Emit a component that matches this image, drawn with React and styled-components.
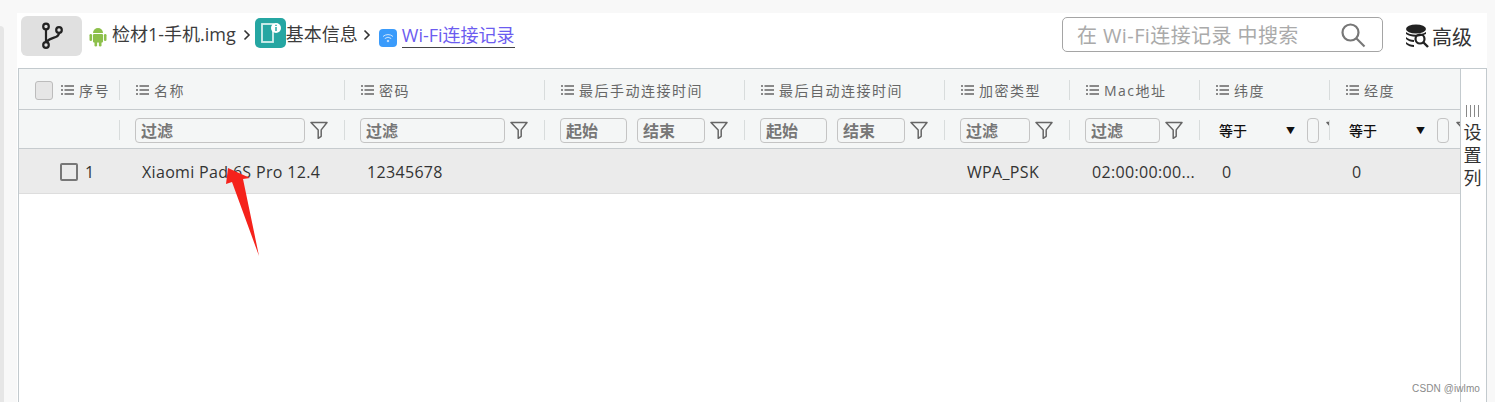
import React from 'react'
import styled, { createGlobalStyle } from 'styled-components'

const GlobalStyle = createGlobalStyle`
  html, body {
    margin: 0;
    padding: 0;
    background: #f8f8f8;
  }
  * {
    box-sizing: border-box;
  }
`

const COLUMNS = '100px 225px 200px 200px 200px 125px 130px 130px 131px'

const Page = styled.div`
  position: relative;
  display: flex;
  width: 1495px;
  height: 402px;
  overflow: hidden;
  padding: 13px 8px 0 0;
  font-family: "Open Sans", "Noto Sans CJK SC", sans-serif;
  color: #333;
`

const SidePanel = styled.div`
  width: 4px;
  margin: 13px 13px 0 0;
  background: #e6e6e6;
  border-top-right-radius: 4px;
`

const Main = styled.div`
  flex: 1;
  display: flex;
  flex-direction: column;
  gap: 10px;
  background: #fff;
`

const Toolbar = styled.div`
  display: flex;
  align-items: center;
  height: 45px;
  padding: 3px 0 2px 4px;
  flex-shrink: 0;
`

const BranchButton = styled.div`
  display: flex;
  align-items: center;
  justify-content: center;
  width: 61px;
  height: 40px;
  background: #e0e0e0;
  border-radius: 6px;
  margin-right: 7px;
`

const Crumb = styled.span`
  margin-bottom: 6px;
  font-size: 18px;
  color: #3c3c3c;
  white-space: nowrap;
`

const CrumbSep = styled.span`
  display: flex;
  width: ${(props) => props.$width}px;
  margin-bottom: 3px;
  padding-left: ${(props) => props.$pad}px;
  color: #333;
`

const TealIcon = styled.div`
  display: flex;
  align-items: center;
  justify-content: center;
  width: 31px;
  height: 30px;
  margin-top: -6px;
  background: #25a6a2;
  border-radius: 5px;
  flex-shrink: 0;
`

const WifiIcon = styled.div`
  display: flex;
  align-items: center;
  justify-content: center;
  width: 18px;
  height: 18px;
  margin: 4px 5px 0 0;
  background: #3a9bfb;
  border-radius: 4px;
  flex-shrink: 0;
`

const CurrentCrumb = styled(Crumb)`
  margin-bottom: 2px;
  color: #6c5cf0;
  border-bottom: 1px solid #444;
  line-height: 24px;
`

const SearchBox = styled.div`
  display: flex;
  align-items: center;
  justify-content: space-between;
  width: 321px;
  height: 35px;
  margin: -3px 0 0 auto;
  padding: 0 16px 0 14px;
  border: 1px solid #a5a5a5;
  border-radius: 5px;
`

const SearchInput = styled.input`
  width: 250px;
  border: none;
  outline: none;
  padding: 1px 0 0;
  background: transparent;
  font: 20px "Open Sans", "Noto Sans CJK SC", sans-serif;
  letter-spacing: 0.4px;
  &::placeholder {
    color: #aaa;
    opacity: 1;
  }
`

const Advanced = styled.div`
  display: flex;
  align-items: center;
  gap: 3px;
  margin: 0 15px 0 22px;
  font-size: 20px;
  color: #333;
`

const Table = styled.div`
  flex: 1;
  display: flex;
  margin-left: 1px;
  border: 1px solid #c3cace;
  border-bottom: none;
`

const TableBody = styled.div`
  width: 1441px;
  flex-shrink: 0;
  display: flex;
  flex-direction: column;
`

const Row = styled.div`
  display: grid;
  grid-template-columns: ${COLUMNS};
  background: ${(props) => props.$bg};
  height: ${(props) => props.$height}px;
  border-bottom: 1px solid ${(props) => props.$line};
`

const HeadCell = styled.div`
  display: flex;
  align-items: center;
  gap: 5px;
  overflow: hidden;
  padding-top: 2px;
  font-size: 14px;
  letter-spacing: 1.5px;
  color: #666;
  white-space: nowrap;
  padding-left: ${(props) => (props.$first ? 16 : 0)}px;
  &::before {
    content: ${(props) => (props.$first ? 'none' : '""')};
    width: 1px;
    height: 20px;
    margin-right: 11px;
    background: #d8dcdc;
    flex-shrink: 0;
  }
`

const FilterCell = styled.div`
  display: flex;
  align-items: center;
  overflow: hidden;
  padding-top: 2px;
  &::before {
    content: ${(props) => (props.$first ? 'none' : '""')};
    width: 1px;
    height: 20px;
    margin-right: 15px;
    background: #d8dcdc;
    flex-shrink: 0;
  }
`

const HeadCheck = styled.span`
  width: 18px;
  height: 19px;
  margin-right: 3px;
  background: #e6e6e6;
  border: 1px solid #bcbcbc;
  border-radius: 3px;
  flex-shrink: 0;
`

const FilterInput = styled.input`
  width: ${(props) => props.$width}px;
  height: 25px;
  margin-right: ${(props) => props.$gap}px;
  padding: 0 5px;
  border: 1px solid #c4c4c4;
  border-radius: 4px;
  outline: none;
  background: transparent;
  flex-shrink: 0;
  font: bold 16px "Noto Sans CJK SC", sans-serif;
  &::placeholder {
    color: #777;
    opacity: 1;
  }
`

const Equals = styled.div`
  display: flex;
  justify-content: space-between;
  align-items: center;
  width: 76px;
  margin: 0 12px 0 4px;
  flex-shrink: 0;
  font-size: 14px;
  font-weight: 500;
  color: #111;
`

const Caret = styled.span`
  font-size: 9px;
`

const Narrow = styled.span`
  width: 12px;
  height: 25px;
  margin-right: 7px;
  border: 1px solid #c4c4c4;
  border-radius: 4px;
  flex-shrink: 0;
`

const DataCell = styled.div`
  display: flex;
  align-items: center;
  padding: 2px 0 0 ${(props) => (props.$first ? 41 : 23)}px;
  font-size: 16px;
  letter-spacing: 0.33px;
  color: #333;
  min-width: 0;
  white-space: nowrap;
`

const RowCheck = styled.span`
  width: 18px;
  height: 18px;
  margin-right: 7px;
  border: 2px solid #777;
  border-radius: 2px;
  flex-shrink: 0;
`

const ColumnSetter = styled.div`
  flex: 1;
  display: flex;
  flex-direction: column;
  align-items: center;
  padding: 36px 2px 0 0;
  border-left: 1px solid #c3cace;
  background: #fff;
`

const Bars = styled.span`
  width: 14px;
  height: 12px;
  margin-bottom: 4px;
  background: repeating-linear-gradient(90deg, #888 0 1px, transparent 1px 4px);
`

const SetterText = styled.span`
  font-size: 18px;
  line-height: 23px;
  width: 18px;
  text-align: center;
  color: #333;
`

const ArrowMark = styled.svg`
  position: absolute;
  left: 220px;
  top: 165px;
`

const Watermark = styled.span`
  position: absolute;
  right: 15px;
  bottom: 8px;
  font: 10px "Liberation Sans", sans-serif;
  letter-spacing: 0.1px;
  color: #8a8a8a;
`

const ListIcon = () => (
  <svg width="13" height="10" viewBox="0 0 13 10" style={{ flexShrink: 0 }}>
    <path d="M0 1h2M0 5h2M0 9h2M3.500 1H13M3.500 5H13M3.500 9H13" stroke="#666" strokeWidth="1.400" />
  </svg>
)

const FunnelIcon = () => (
  <svg width="18" height="20" viewBox="0 0 18 20" fill="none" style={{ flexShrink: 0 }}>
    <path d="M1 2.500h16l-5.800 7.400v6.400l-3 2V9.900z" stroke="#666" strokeWidth="1.500" strokeLinejoin="round" />
  </svg>
)

const BranchIcon = () => (
  <svg width="26" height="28" viewBox="0 0 26 28" fill="none" stroke="#222" strokeWidth="2.200">
    <circle cx="7" cy="4.500" r="2.800" />
    <circle cx="7" cy="23" r="2.800" />
    <circle cx="20" cy="8" r="2.800" />
    <path d="M7 7.500v12.500M20 11c0 6-8 3-12.500 9" />
  </svg>
)

const AndroidIcon = () => (
  <svg width="18" height="20" viewBox="0 0 18 20" fill="#8dc04b" style={{ marginRight: 5, marginTop: 1, flexShrink: 0 }}>
    <path d="M4 6a5 5 0 0 1 10 0z" />
    <rect x="4" y="7" width="10" height="8.500" rx="1" />
    <rect x="0.500" y="7" width="2.600" height="7" rx="1.300" />
    <rect x="14.900" y="7" width="2.600" height="7" rx="1.300" />
    <rect x="5.500" y="14" width="2.600" height="5.500" rx="1.300" />
    <rect x="9.900" y="14" width="2.600" height="5.500" rx="1.300" />
  </svg>
)

const ChevronIcon = () => (
  <svg width="8" height="12" viewBox="0 0 8 12" fill="none" stroke="#333" strokeWidth="1.600">
    <path d="M1.500 1.500 6 6l-4.500 4.500" />
  </svg>
)

const PhoneInfoIcon = () => (
  <svg width="24" height="24" viewBox="0 0 24 24">
    <rect x="4" y="3" width="11" height="18" fill="none" stroke="#d5f0ee" strokeWidth="1.800" />
    <circle cx="18" cy="7" r="5" fill="#fff" />
    <path d="M18 6v4M18 3.800v1.200" stroke="#25a6a2" strokeWidth="1.500" />
  </svg>
)

const WifiGlyph = () => (
  <svg width="12" height="10" viewBox="0 0 12 10" fill="none" stroke="#cfe6ff" strokeWidth="1">
    <path d="M1 3.500a7.500 7.500 0 0 1 10 0M2.800 5.500a5 5 0 0 1 6.400 0" />
    <circle cx="6" cy="8" r="0.800" fill="#cfe6ff" />
  </svg>
)

const SearchGlyph = () => (
  <svg width="26" height="26" viewBox="0 0 26 26" fill="none" stroke="#777" strokeWidth="2.200" style={{ flexShrink: 0 }}>
    <circle cx="10.500" cy="10.500" r="8" />
    <path d="m16.500 16.500 8 8" />
  </svg>
)

const AdvancedIcon = () => (
  <svg width="24" height="24" viewBox="0 0 24 24" style={{ flexShrink: 0 }}>
    <ellipse cx="11" cy="5" rx="10" ry="4.500" fill="#222" />
    <path d="M1 8c3 3 14 4 20 0v2c-6 3-14 4-20 0zM1 13c2 2 5 3 8 3v2c-3 0-6-1-8-3zM1 18c2 2 5 3 8 3v2c-3 0-6-1-8-3z" fill="#222" />
    <circle cx="15" cy="15" r="4.500" fill="none" stroke="#222" strokeWidth="2.200" />
    <path d="m18 18 5 5" stroke="#222" strokeWidth="2.400" />
  </svg>
)

const headers = ['名称', '密码', '最后手动连接时间', '最后自动连接时间', '加密类型', 'Mac地址', '纬度', '经度']

const Coordinate = () => (
  <FilterCell>
    <Equals>
      等于
      <Caret>▼</Caret>
    </Equals>
    <Narrow />
    <FunnelIcon />
  </FilterCell>
)

const TextFilter = ({ width }) => (
  <FilterCell>
    <FilterInput $width={width} $gap={5} placeholder="过滤" />
    <FunnelIcon />
  </FilterCell>
)

const DateFilter = () => (
  <FilterCell>
    <FilterInput $width={67} $gap={10} placeholder="起始" />
    <FilterInput $width={68} $gap={5} placeholder="结束" />
    <FunnelIcon />
  </FilterCell>
)

export default function App() {
  return (
    <Page>
      <GlobalStyle />
      <SidePanel />
      <Main>
        <Toolbar>
          <BranchButton>
            <BranchIcon />
          </BranchButton>
          <AndroidIcon />
          <Crumb>检材1-手机.img</Crumb>
          <CrumbSep $width={19} $pad={7}>
            <ChevronIcon />
          </CrumbSep>
          <TealIcon>
            <PhoneInfoIcon />
          </TealIcon>
          <Crumb>基本信息</Crumb>
          <CrumbSep $width={21} $pad={5}>
            <ChevronIcon />
          </CrumbSep>
          <WifiIcon>
            <WifiGlyph />
          </WifiIcon>
          <CurrentCrumb>Wi-Fi连接记录</CurrentCrumb>
          <SearchBox>
            <SearchInput placeholder="在 Wi-Fi连接记录 中搜索" />
            <SearchGlyph />
          </SearchBox>
          <Advanced>
            <AdvancedIcon />
            高级
          </Advanced>
        </Toolbar>
        <Table>
          <TableBody>
            <Row $bg="#f4f6f6" $height={41} $line="#c6cbce">
              <HeadCell $first>
                <HeadCheck />
                <ListIcon />
                序号
              </HeadCell>
              {headers.map((title) => (
                <HeadCell key={title}>
                  <ListIcon />
                  {title}
                </HeadCell>
              ))}
            </Row>
            <Row $bg="#f4f6f6" $height={39} $line="#c6cbce">
              <FilterCell $first />
              <TextFilter width={170} />
              <TextFilter width={145} />
              <DateFilter />
              <DateFilter />
              <TextFilter width={70} />
              <TextFilter width={75} />
              <Coordinate />
              <Coordinate />
            </Row>
            <Row $bg="#ebebeb" $height={45} $line="#dddddd">
              <DataCell $first>
                <RowCheck />1
              </DataCell>
              <DataCell>Xiaomi Pad 6S Pro 12.4</DataCell>
              <DataCell>12345678</DataCell>
              <DataCell />
              <DataCell />
              <DataCell>WPA_PSK</DataCell>
              <DataCell>02:00:00:00...</DataCell>
              <DataCell>0</DataCell>
              <DataCell>0</DataCell>
            </Row>
          </TableBody>
          <ColumnSetter>
            <Bars />
            <SetterText>设置列</SetterText>
          </ColumnSetter>
        </Table>
      </Main>
      <ArrowMark width="45" height="95" viewBox="0 0 45 95">
        <path d="M8 3 6 19l6-2 27 74-16-77 7-1z" fill="#f5221b" />
      </ArrowMark>
      <Watermark>CSDN @iwlmo</Watermark>
    </Page>
  )
}
